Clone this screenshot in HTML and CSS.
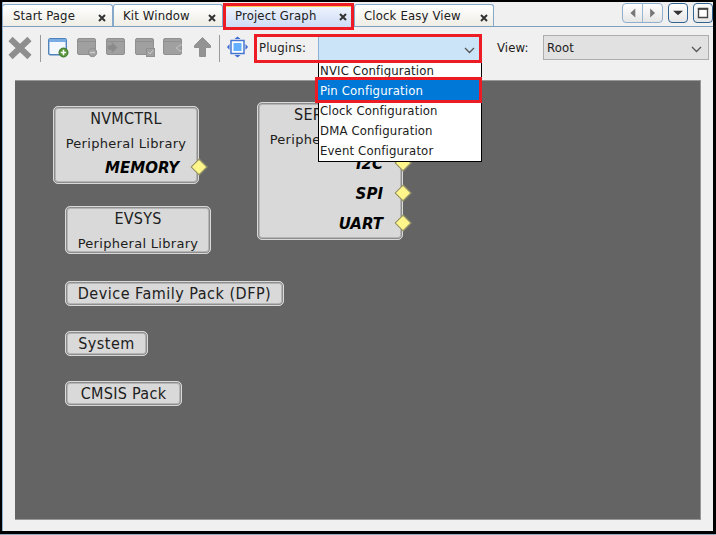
FILE: index.html
```html
<!DOCTYPE html>
<html lang="en">
<head>
<meta charset="utf-8">
<title>Project Graph</title>
<link rel="stylesheet" href="styles.css">
</head>
<body>
<main class="window">
  <header class="tabs">
    <div class="tab start"><span class="label">Start Page</span><svg class="close" viewBox="0 0 8 8"><path d="M1 1l6 6M7 1L1 7"/></svg></div>
    <div class="tab kit"><span class="label">Kit Window</span><svg class="close" viewBox="0 0 8 8"><path d="M1 1l6 6M7 1L1 7"/></svg></div>
    <div class="tab project"><span class="label">Project Graph</span><svg class="close" viewBox="0 0 8 8"><path d="M1 1l6 6M7 1L1 7"/></svg></div>
    <div class="tab clock"><span class="label">Clock Easy View</span><svg class="close" viewBox="0 0 8 8"><path d="M1 1l6 6M7 1L1 7"/></svg></div>
    <div class="controls">
      <div class="pair"><svg viewBox="0 0 41 20"><path class="split" d="M20.500 0v20"/><path fill="#777" d="M12.500 5v10L7 10zM29 5v10l5.500-5z"/></svg></div>
      <div class="control"><svg viewBox="0 0 20 20"><path fill="#333" d="M4.500 7.500h11l-5.500 5z"/></svg></div>
      <div class="control"><svg viewBox="0 0 20 20"><path fill="#fff" stroke="#444" stroke-width="1.500" d="M5 5h10v10H5z"/><path stroke="#444" stroke-width="2" d="M4.300 5.500h11.400"/></svg></div>
    </div>
  </header>
  <nav class="toolbar">
    <svg class="tools" viewBox="0 0 251 36">
      <path stroke="#8e8e8e" stroke-width="6" d="M8.500 12L27.500 30M27.500 12L8.500 30"/>
      <path stroke="#9a9a9a" d="M38.500 8v27M217.500 8v27"/>
      <g transform="translate(46 11)"><rect x=".7" y=".7" width="17.600" height="16" rx="1.500" fill="#f3f8ff" stroke="#4f83b9" stroke-width="1.400"/><path fill="#78ace2" d="M1 1h17v3H1z"/><circle cx="15.500" cy="14.500" r="4.500" fill="#57943a" stroke="#3c792a"/><path stroke="#fff" stroke-width="1.600" d="M12.800 14.500h5.400M15.500 11.800v5.400"/></g>
      <g fill="#a0a0a0" stroke="#909090">
        <g transform="translate(75 11)"><rect x=".5" y=".5" width="18" height="16" rx="1.500"/><path d="M1 3.500h17"/><circle cx="15.500" cy="14.500" r="4.200"/><path stroke="#ccc" stroke-width="1.500" d="M13 14.500h5"/></g>
        <g transform="translate(104 11)"><rect x=".5" y=".5" width="18" height="16" rx="1.500"/><path d="M1 3.500h17"/><path fill="#8a8a8a" d="M2 7.500h4v-3l5 5-5 5v-3H2z"/></g>
        <g transform="translate(133 11)"><rect x=".5" y=".5" width="18" height="16" rx="1.500"/><path d="M1 3.500h17"/><rect x="11.500" y="10.500" width="8" height="8"/><path fill="none" stroke="#ccc" d="M13 14l2 2 3-4"/></g>
        <g transform="translate(161 11)"><rect x=".5" y=".5" width="18" height="16" rx="1.500"/><path d="M1 3.500h17"/><path fill="none" stroke="#c0c0c0" d="M19 7h-2l-4 3 4 3h2"/></g>
        <path fill="#939393" d="M200.500 10.500l8 8v2h-5v9h-6v-9h-5v-2z"/>
      </g>
      <g><rect x="229" y="13.500" width="13" height="13" fill="#fff" stroke="#4676cf" stroke-width="1.500"/><rect x="231.500" y="16" width="8" height="8" fill="#62b0ff"/><path fill="#3e6bd2" d="M235.500 9.500l3 2.500h-6zM235.500 30.500l3-2.500h-6zM225 20l2.500-3v6zM246 20l-2.500-3v6z"/></g>
    </svg>
    <div class="plugins"><label class="caption">Plugins:</label><div class="combo blue"><svg class="chevron" viewBox="0 0 11 7"><path d="M1 1l4.500 4.500L10 1"/></svg></div></div>
    <label class="view">View:</label>
    <div class="combo root"><span>Root</span><svg class="chevron" viewBox="0 0 11 7"><path d="M1 1l4.500 4.500L10 1"/></svg></div>
    <div class="menu">
      <div class="option">NVIC Configuration</div><div class="option selected">Pin Configuration</div><div class="option">Clock Configuration</div><div class="option">DMA Configuration</div><div class="option">Event Configurator</div>
    </div>
  </nav>
  <section class="canvas">
    <article class="node nvm"><div class="name">NVMCTRL</div><div class="kind">Peripheral Library</div><div class="port">MEMORY<i></i></div></article>
    <article class="node sercom"><div class="name">SERCOM3</div><div class="kind">Peripheral Library</div><div class="port">I2C<i></i></div><div class="port">SPI<i></i></div><div class="port">UART<i></i></div></article>
    <article class="node evsys"><div class="name">EVSYS</div><div class="kind">Peripheral Library</div></article>
    <article class="node small dfp">Device Family Pack (DFP)</article>
    <article class="node small system">System</article>
    <article class="node small cmsis">CMSIS Pack</article>
  </section>
</main>
</body>
</html>
```
FILE: styles.css
```css
* { box-sizing: border-box; }
body {
  margin: 0;
  width: 716px;
  height: 535px;
  overflow: hidden;
  background: #eee;
  border-bottom: 1px solid #8eaac2;
  font: 13px/16px "DejaVu Sans Condensed", "DejaVu Sans", sans-serif;
  letter-spacing: .15px;
  color: #202020;
}
.window {
  height: 534px;
  border: solid #000;
  border-width: 2px 3px 3px 2px;
  background: #f0f0f0;
  box-shadow: inset 1px 0 #8eb2d2;
}
svg { display: block; fill: none; }
.tabs {
  height: 25px;
  display: flex;
  padding-top: 2px;
  border-bottom: 1px solid #7f9fbe;
}
.tab {
  display: flex;
  justify-content: space-between;
  padding: 3px 6px 0 10px;
  background: linear-gradient(#fff, #eeede5);
  border: 1px solid #86a9c9;
  border-bottom: 0;
  border-radius: 3px 3px 0 0;
  white-space: nowrap;
}
.start { width: 111px; }
.kit { width: 110px; padding-left: 9px; }
.project {
  position: relative;
  z-index: 2;
  width: 131px;
  height: 27px;
  margin-top: -1px;
  padding: 2px 4px 0 9px;
  border: 3px solid #ed1c24;
  border-radius: 0;
  background: linear-gradient(#eff4ff, #cedcf5);
  box-shadow: inset 0 1px #ffc85a;
}
.clock { width: 140px; padding-left: 9px; padding-right: 5px; }
.close { width: 8px; height: 8px; margin-top: 6px; stroke: #333; stroke-width: 2; }
.project .close { margin-top: 5px; }
.controls {
  display: flex;
  gap: 5px;
  margin: -1px 0 0 auto;
}
.pair, .control {
  height: 20px;
  width: 20px;
  border: 1px solid #326393;
  border-radius: 4px;
  background: linear-gradient(#fff, #e6e6e6);
}
.pair { width: 41px; border-color: #8eafcf; }
.pair svg, .control svg { width: 100%; height: 100%; }
.split { stroke: #8eafcf; }
.toolbar {
  position: relative;
  height: 53px;
  display: flex;
  align-items: flex-start;
}
.tools { width: 251px; height: 36px; flex: none; }
.plugins {
  width: 228px;
  height: 29px;
  margin-top: 7px;
  margin-left: 1px;
  display: flex;
  border: 3px solid #ed1c24;
}
.caption { width: 61px; padding: 3px 0 0 2px; }
.combo { position: relative; display: flex; }
.blue { flex: 1; background: #cce4f7; border-left: 1px solid #8ab2d5; }
.chevron { width: 11px; height: 7px; stroke: #555; stroke-width: 1.3; margin: auto 4px 6px auto; }
.view { width: 46px; margin: 13px 0 0 15px; }
.root {
  width: 166px;
  height: 25px;
  margin-top: 8px;
  padding: 4px 0 0 3px;
  border: 1px solid #adadad;
  background: #e1e1e1;
}
.root .chevron { margin-bottom: 6px; margin-right: 6px; }
.menu {
  position: absolute;
  z-index: 3;
  top: 36px;
  left: 316px;
  width: 164px;
  height: 99px;
  border: 1px solid #000;
  border-top: 0;
  background: #fff;
}
.option { height: 20px; line-height: 15px; padding-left: 1px; white-space: nowrap; }
.option.selected {
  position: relative;
  left: -4px;
  width: 167px;
  height: 26px;
  margin: -6px 0 0;
  padding-left: 2px;
  line-height: 21px;
  border: 3px solid #ed1c24;
  background: #0078d7;
  color: #fff;
}
.option:last-child { height: 17px; }
.canvas {
  position: relative;
  height: 440px;
  margin: 0 12px 0 13px;
  background: #646464;
  border: solid #979797;
  border-width: 1px 1px 1px 0;
}
.node {
  position: absolute;
  border: 1px solid #d9d9d9;
  border-radius: 5px;
  background: #d9d9d9;
  box-shadow: inset 0 0 0 1px #8d8d8d, inset 0 0 0 2px #b5b5b5;
  padding: 1px;
  font-family: "DejaVu Sans Condensed", sans-serif;
  text-align: center;
  white-space: nowrap;
}
.name { height: 24px; font-size: 16px; line-height: 22px; letter-spacing: .2px; }
.kind { height: 24px; font: 13px/24px "DejaVu Sans", sans-serif; letter-spacing: .3px; }
.port {
  position: relative;
  height: 30px;
  padding-right: 18px;
  text-align: right;
  font: italic bold 15px/24px "DejaVu Sans", sans-serif;
  letter-spacing: 0;
  color: #000;
}
.port i {
  position: absolute;
  right: -8px;
  top: 5px;
  width: 12px;
  height: 12px;
  transform: rotate(45deg);
  background: #fff68b;
  border: 1px solid #8a8665;
}
.nvm { left: 38px; top: 25px; width: 146px; height: 78px; }
.sercom { left: 242px; top: 21px; width: 146px; height: 138px; }
.evsys { left: 50px; top: 125px; width: 146px; height: 48px; }
.small { left: 50px; height: 25px; font-size: 16px; line-height: 22px; letter-spacing: .5px; }
.dfp { top: 200px; width: 219px; }
.system { top: 250px; width: 83px; }
.cmsis { top: 300px; width: 117px; letter-spacing: .3px; }
```
